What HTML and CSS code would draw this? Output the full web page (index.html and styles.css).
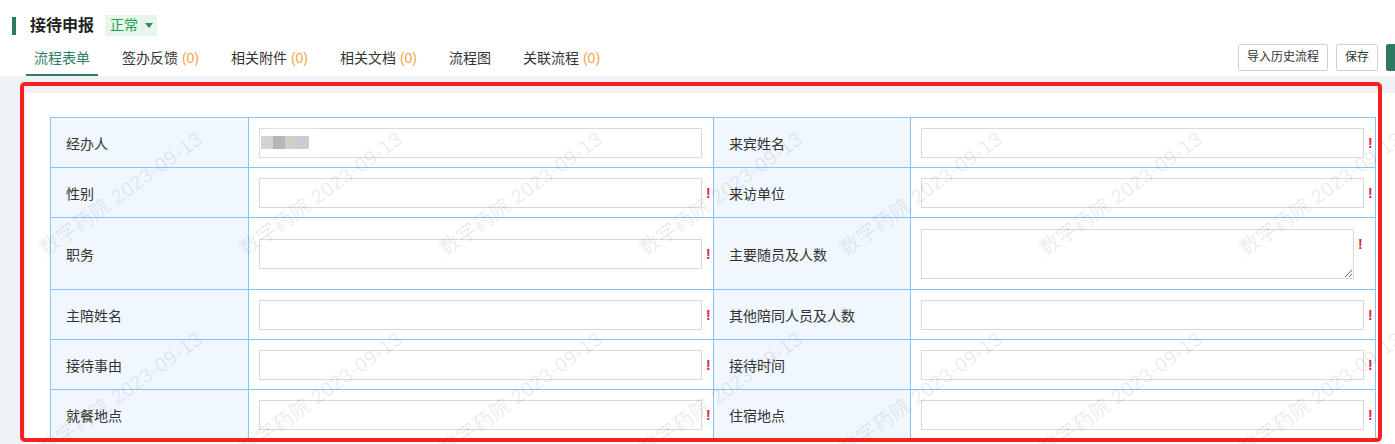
FILE: index.html
```html
<!DOCTYPE html>
<html lang="zh-CN">
<head>
<meta charset="utf-8">
<title>接待申报</title>
<link rel="stylesheet" href="styles.css">
</head>
<body>
<div class="page">
  <header class="head">
    <div class="title-row">
      <span class="title-bar"></span>
      <h1 class="title">接待申报</h1>
      <span class="badge">正常<i class="caret"></i></span>
    </div>
    <div class="tab-row">
      <nav class="tabs">
        <a class="tab active">流程表单</a>
        <a class="tab">签办反馈 <span class="cnt">(0)</span></a>
        <a class="tab">相关附件 <span class="cnt">(0)</span></a>
        <a class="tab">相关文档 <span class="cnt">(0)</span></a>
        <a class="tab">流程图</a>
        <a class="tab">关联流程 <span class="cnt">(0)</span></a>
      </nav>
      <div class="actions">
        <button class="btn">导入历史流程</button>
        <button class="btn">保存</button>
        <button class="btn primary" aria-label="提交"></button>
      </div>
    </div>
  </header>

  <main class="body">
    <section class="panel">
      <div class="form">
        <div class="lbl">经办人</div>
        <div class="val"><div class="inp filled"><span class="blur"><i class="b1"></i><i class="b2"></i><i class="b3"></i><i class="b4"></i></span></div><span class="req hide">!</span></div>
        <div class="lbl">来宾姓名</div>
        <div class="val"><input class="inp" type="text"><span class="req">!</span></div>

        <div class="lbl">性别</div>
        <div class="val"><input class="inp" type="text"><span class="req">!</span></div>
        <div class="lbl">来访单位</div>
        <div class="val"><input class="inp" type="text"><span class="req">!</span></div>

        <div class="lbl">职务</div>
        <div class="val"><input class="inp" type="text"><span class="req">!</span></div>
        <div class="lbl">主要随员及人数</div>
        <div class="val"><textarea class="ta"></textarea><span class="req ta-req">!</span></div>

        <div class="lbl">主陪姓名</div>
        <div class="val"><input class="inp" type="text"><span class="req">!</span></div>
        <div class="lbl">其他陪同人员及人数</div>
        <div class="val"><input class="inp" type="text"><span class="req">!</span></div>

        <div class="lbl">接待事由</div>
        <div class="val"><input class="inp" type="text"><span class="req">!</span></div>
        <div class="lbl">接待时间</div>
        <div class="val"><input class="inp" type="text"><span class="req">!</span></div>

        <div class="lbl">就餐地点</div>
        <div class="val"><input class="inp" type="text"><span class="req">!</span></div>
        <div class="lbl">住宿地点</div>
        <div class="val"><input class="inp" type="text"><span class="req">!</span></div>
      </div>

      <svg class="wm" aria-hidden="true">
        <defs>
          <pattern id="wmp" x="-4" y="2" width="200" height="200" patternUnits="userSpaceOnUse">
            <text class="wm-t" x="100" y="100" transform="rotate(-36 100 100)" text-anchor="middle" dominant-baseline="middle">数字药院 2023-09-13</text>
          </pattern>
        </defs>
        <rect width="100%" height="100%" fill="url(#wmp)"></rect>
      </svg>
    </section>
  </main>

  <div class="annot"></div>
</div>
</body>
</html>
```

FILE: styles.css
```css
html, body {
  margin: 0;
  padding: 0;
  overflow: hidden;
  background: #eef1f6;
}

.page {
  position: relative;
  width: 1460px;
  font-family: "Liberation Sans", "Noto Sans CJK SC", sans-serif;
  color: #333;
}

/* header */
.head {
  background: #fff;
  height: 76px;
  box-sizing: border-box;
  padding-top: 15px;
}

.title-row {
  display: flex;
  align-items: center;
  height: 21px;
  padding-left: 12px;
}

.title-bar {
  width: 4px;
  height: 18px;
  background: #2e7964;
}

.title {
  margin: 0 0 0 14px;
  font-size: 16px;
  font-weight: bold;
  line-height: 21px;
  color: #222;
}

.badge {
  display: flex;
  align-items: center;
  height: 21px;
  margin-left: 11px;
  padding: 0 4px 0 5px;
  background: #e7f6eb;
  color: #1fa64c;
  font-size: 14px;
  line-height: 21px;
}

.caret {
  width: 0;
  height: 0;
  margin-left: 7px;
  border-left: 4px solid transparent;
  border-right: 4px solid transparent;
  border-top: 5px solid #2e8a58;
}

.tab-row {
  display: flex;
  height: 40px;
  padding-left: 26px;
  padding-right: 24px;
}

.tabs {
  display: flex;
  gap: 16px;
}

.tab {
  display: block;
  padding: 12px 8px 6px;
  line-height: 20px;
  font-size: 14px;
  color: #333;
  border-bottom: 2px solid transparent;
  white-space: nowrap;
}

.tab.active {
  color: #2f7d68;
  border-bottom-color: #2f7d68;
}

.cnt {
  color: #f3a54a;
}

.actions {
  display: flex;
  gap: 8px;
  margin-left: auto;
  padding-top: 8px;
}

.btn {
  height: 27px;
  padding: 0 8px;
  border: 1px solid #cfcfcf;
  border-radius: 2px;
  background: #fff;
  color: #333;
  font-family: "Liberation Sans", "Noto Sans CJK SC", sans-serif;
  font-size: 12px;
  line-height: 25px;
}

.btn.primary {
  background: #2e7964;
  border-color: #2e7964;
  color: #fff;
  width: 50px;
}

/* body */
.body {
  padding: 17px 0 0 26px;
}

.panel {
  position: relative;
  background: #fff;
  padding: 24px;
  height: 400px;
}

.form {
  display: grid;
  grid-template-columns: 198px 465px 197px 465px;
  grid-template-rows: 50px 50px 72px 50px 50px 50px;
  width: 1325px;
  border-top: 1px solid #87c3f3;
  border-left: 1px solid #87c3f3;
}

.lbl, .val {
  box-sizing: border-box;
  border-right: 1px solid #87c3f3;
  border-bottom: 1px solid #87c3f3;
  display: flex;
  align-items: center;
}

.lbl {
  background: #f0f7fe;
  padding-left: 15px;
  font-size: 14px;
  color: #333;
}

.val {
  padding-left: 10px;
}

.inp {
  box-sizing: border-box;
  width: 443px;
  height: 30px;
  margin: 0;
  border: 1px solid #d9d9d9;
  background: #fff;
  padding: 0 6px;
  font-size: 14px;
  outline: none;
}

.filled {
  display: flex;
  align-items: center;
  padding: 0;
}

.blur {
  display: flex;
  height: 13px;
  margin-left: 1px;
  filter: blur(0.4px);
  box-shadow: 6px 0 8px 4px #fff;
}

.blur i {
  display: block;
  width: 12px;
  height: 13px;
}

.blur .b1 { background: #d6d2ce; }
.blur .b2 { background: #b6b6b8; }
.blur .b3 { background: #d1cdc8; }
.blur .b4 { background: #c9cdd6; }

.ta {
  box-sizing: border-box;
  width: 433px;
  height: 50px;
  margin: 0;
  border: 1px solid #d9d9d9;
  padding: 4px 6px;
  font-family: inherit;
  outline: none;
}

.req {
  margin-left: 4px;
  color: #e0233a;
  font-weight: bold;
  font-size: 14px;
  line-height: 14px;
}

.ta-req {
  align-self: flex-start;
  margin-top: 19px;
}

.req.hide {
  visibility: hidden;
}

/* watermark */
.wm {
  position: absolute;
  left: 0;
  top: 0;
  width: 100%;
  height: 100%;
  pointer-events: none;
}

.wm-t {
  font-family: "Liberation Sans", "Noto Sans CJK SC", sans-serif;
  font-size: 20px;
  letter-spacing: 0.5px;
  fill: #000;
  fill-opacity: 0.075;
}

/* annotation frame */
.annot {
  position: absolute;
  left: 20px;
  top: 82px;
  width: 1362px;
  height: 360px;
  box-sizing: border-box;
  border: 4px solid #fa1e1e;
  border-radius: 5px;
  pointer-events: none;
}
```
